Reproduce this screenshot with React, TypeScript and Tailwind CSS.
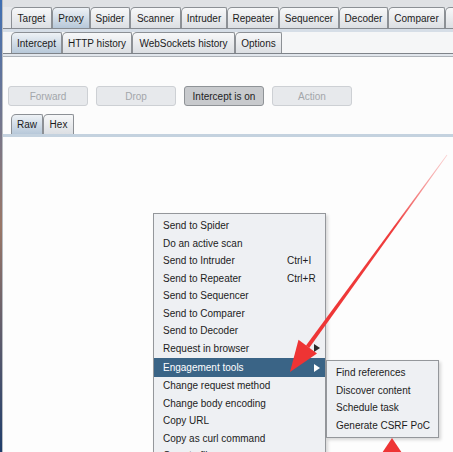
import React from 'react'

const mainTabs = [
  { label: 'Target', w: 'w-[41px]' },
  { label: 'Proxy', w: 'w-[38px]', active: true },
  { label: 'Spider', w: 'w-[40px]' },
  { label: 'Scanner', w: 'w-[51px]' },
  { label: 'Intruder', w: 'w-[46px]' },
  { label: 'Repeater', w: 'w-[52px]' },
  { label: 'Sequencer', w: 'w-[60px]' },
  { label: 'Decoder', w: 'w-[49px]' },
  { label: 'Comparer', w: 'w-[57px]' },
  { label: 'Extender', w: 'w-[60px]' },
]

const subTabs = [
  { label: 'Intercept', w: 'w-[51px]', active: true },
  { label: 'HTTP history', w: 'w-[70px]' },
  { label: 'WebSockets history', w: 'w-[103px]' },
  { label: 'Options', w: 'w-[47px]' },
]

const menuItems = [
  { label: 'Send to Spider' },
  { label: 'Do an active scan' },
  { label: 'Send to Intruder', shortcut: 'Ctrl+I' },
  { label: 'Send to Repeater', shortcut: 'Ctrl+R' },
  { label: 'Send to Sequencer' },
  { label: 'Send to Comparer' },
  { label: 'Send to Decoder' },
  { label: 'Request in browser', sub: true },
  { label: 'Engagement tools', sub: true, active: true },
  { label: 'Change request method' },
  { label: 'Change body encoding' },
  { label: 'Copy URL' },
  { label: 'Copy as curl command' },
  { label: 'Copy to file' },
  { label: 'Paste from file' },
]

const subItems = ['Find references', 'Discover content', 'Schedule task', 'Generate CSRF PoC']

function Tab({ label, w, active }: { label: string; w: string; active?: boolean }) {
  return (
    <div
      className={`${w} shrink-0 h-full flex items-center justify-center border border-b-0 border-[#8c9095] rounded-tl-[5px] rounded-tr-[2px] text-[10px] text-[#1b1b1b] ${
        active
          ? 'bg-gradient-to-b from-[#eef2f6] to-[#b7c8d9]'
          : 'bg-gradient-to-b from-[#f7f8f9] to-[#dcdfe3]'
      }`}
    >
      {label}
    </div>
  )
}

function Arrow({ white }: { white?: boolean }) {
  return (
    <svg width="6" height="8" viewBox="0 0 6 8">
      <path d="M0 0 L6 4 L0 8 Z" fill={white ? '#ffffff' : '#2a2a2a'} />
    </svg>
  )
}

export default function App() {
  return (
    <div className="relative w-[453px] h-[452px] overflow-hidden flex bg-white font-['Liberation_Sans',Arial,sans-serif]">
      {/* desktop strip behind the window */}
      <div className="w-[2px] shrink-0 bg-gradient-to-b from-[#3e6fb3] via-[#9a7767] to-[#1f3d6b]" />

      <div className="flex-1 flex flex-col border-l border-[#b9bdc2]">
        <div className="h-[7px] bg-[#dfe1e4]" />

        {/* main tabs */}
        <div className="h-[21px] flex items-end pl-[8px] bg-[#e6e8eb]">
          {mainTabs.map((t) => (
            <Tab key={t.label} {...t} />
          ))}
        </div>
        <div className="h-px bg-[#868a90]" />
        <div className="h-[3px] bg-[#d6dee7]" />

        {/* proxy sub tabs */}
        <div className="h-[21px] flex items-end pl-[8px] bg-[#f5f6f7]">
          {subTabs.map((t) => (
            <Tab key={t.label} {...t} />
          ))}
        </div>
        <div className="h-px bg-[#7f848a]" />
        <div className="h-[2px] bg-[#e1e6ec]" />
        <div className="h-px bg-[#aeb3b9]" />

        {/* intercept buttons */}
        <div className="pt-[29px] pl-[5px] flex gap-[8px] bg-[#fcfcfc]">
          {['Forward', 'Drop', 'Intercept is on', 'Action'].map((b) => {
            const on = b === 'Intercept is on'
            return (
              <div
                key={b}
                className={`w-[80px] h-[20px] flex items-center justify-center rounded-[3px] border text-[10px] ${
                  on
                    ? 'bg-[#c8cacd] border-[#8f9397] text-[#1d1d1d]'
                    : 'bg-[#e7e9ec] border-[#cdd0d4] text-[#a3a6aa]'
                }`}
              >
                {b}
              </div>
            )
          })}
        </div>

        {/* raw / hex */}
        <div className="h-[28px] pt-[8px] pl-[8px] flex items-end bg-[#fcfcfc]">
          <Tab label="Raw" w="w-[32px]" active />
          <Tab label="Hex" w="w-[31px]" />
        </div>
        <div className="h-[3px] bg-[#c4d2df]" />
        <div className="flex-1 bg-[#fdfdfd]" />
      </div>

      {/* context menu */}
      <div className="absolute left-[153px] top-[213px] w-[173px] bg-[#eef0f3] border border-[#94979b] py-[3px] shadow-[2px_2px_3px_rgba(0,0,0,0.15)] text-[10px] text-[#1c1c1c]">
        {menuItems.map((m) => (
          <div
            key={m.label}
            className={`flex items-center pl-[9px] pr-[5px] ${
              m.active ? 'h-[19px] mt-px bg-[#3a6486] text-white' : 'h-[17.5px]'
            }`}
          >
            <span className="w-[124px] shrink-0">{m.label}</span>
            <span className="flex-1">{m.shortcut}</span>
            {m.sub && <Arrow white={m.active} />}
          </div>
        ))}
      </div>

      {/* engagement tools submenu */}
      <div className="absolute left-[326px] top-[360px] w-[113px] bg-[#eef0f3] border border-[#94979b] py-[3px] shadow-[2px_2px_3px_rgba(0,0,0,0.15)] text-[10px] text-[#1c1c1c]">
        {subItems.map((s) => (
          <div key={s} className="h-[17.5px] flex items-center pl-[9px]">
            {s}
          </div>
        ))}
      </div>

      {/* red annotation arrows */}
      <svg className="absolute inset-0 pointer-events-none" width="453" height="452" viewBox="0 0 453 452">
        <defs>
          <linearGradient id="fade" x1="447" y1="155" x2="300" y2="360" gradientUnits="userSpaceOnUse">
            <stop offset="0" stopColor="#f26a6a" stopOpacity="0.3" />
            <stop offset="0.35" stopColor="#ef3d3d" />
            <stop offset="1" stopColor="#ee3434" />
          </linearGradient>
        </defs>
        <polygon
          points="447.3,155.2 446.7,154.8 306,345.5 309.2,347.9"
          fill="url(#fade)"
        />
        <polygon points="290,372 298.5,339.8 317,353.4" fill="#ee3434" />
        <polygon points="392,438 382,453 402,453" fill="#ee3434" />
      </svg>
    </div>
  )
}
